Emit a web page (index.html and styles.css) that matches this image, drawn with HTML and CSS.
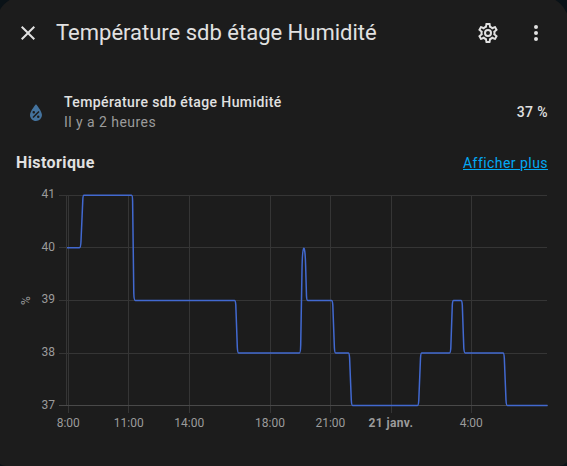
FILE: index.html
```
<!DOCTYPE html>
<html lang="fr">
<head>
<meta charset="utf-8">
<title>Température sdb étage Humidité</title>
<link rel="stylesheet" href="styles.css">
</head>
<body>
<main class="dialog">
  <header class="header">
    <svg class="icon" viewBox="0 0 24 24"><path d="M19,6.41L17.59,5L12,10.59L6.41,5L5,6.41L10.59,12L5,17.59L6.41,19L12,13.41L17.59,19L19,17.59L13.41,12L19,6.41Z"/></svg>
    <h1 class="title">Température sdb étage Humidité</h1>
    <svg class="icon" viewBox="0 0 24 24"><path d="M12,8A4,4 0 0,1 16,12A4,4 0 0,1 12,16A4,4 0 0,1 8,12A4,4 0 0,1 12,8M12,10A2,2 0 0,0 10,12A2,2 0 0,0 12,14A2,2 0 0,0 14,12A2,2 0 0,0 12,10M10,22C9.75,22 9.54,21.82 9.5,21.58L9.13,18.93C8.5,18.68 7.96,18.34 7.44,17.94L4.95,18.95C4.73,19.03 4.46,18.95 4.34,18.73L2.34,15.27C2.21,15.05 2.27,14.78 2.46,14.63L4.57,12.97L4.5,12L4.57,11L2.46,9.37C2.27,9.22 2.21,8.95 2.34,8.73L4.34,5.27C4.46,5.05 4.73,4.96 4.95,5.05L7.44,6.05C7.96,5.66 8.5,5.32 9.13,5.07L9.5,2.42C9.54,2.18 9.75,2 10,2H14C14.25,2 14.46,2.18 14.5,2.42L14.87,5.07C15.5,5.32 16.04,5.66 16.56,6.05L19.05,5.05C19.27,4.96 19.54,5.05 19.66,5.27L21.66,8.73C21.79,8.95 21.73,9.22 21.54,9.37L19.43,11L19.5,12L19.43,13L21.54,14.63C21.73,14.78 21.79,15.05 21.66,15.27L19.66,18.73C19.54,18.95 19.27,19.04 19.05,18.95L16.56,17.95C16.04,18.34 15.5,18.68 14.87,18.93L14.5,21.58C14.46,21.82 14.25,22 14,22H10M11.25,4L10.88,6.61C9.68,6.86 8.62,7.5 7.85,8.39L5.44,7.35L4.69,8.65L6.8,10.2C6.4,11.37 6.4,12.64 6.8,13.8L4.68,15.36L5.43,16.66L7.86,15.62C8.63,16.5 9.68,17.14 10.87,17.38L11.24,20H12.76L13.13,17.39C14.32,17.14 15.37,16.5 16.14,15.62L18.57,16.66L19.32,15.36L17.2,13.81C17.6,12.64 17.6,11.37 17.2,10.2L19.31,8.65L18.56,7.35L16.15,8.39C15.38,7.5 14.32,6.86 13.12,6.62L12.75,4H11.25Z"/></svg>
    <svg class="icon menu" viewBox="0 0 24 24"><path d="M12,16A2,2 0 0,1 14,18A2,2 0 0,1 12,20A2,2 0 0,1 10,18A2,2 0 0,1 12,16M12,10A2,2 0 0,1 14,12A2,2 0 0,1 12,14A2,2 0 0,1 10,12A2,2 0 0,1 12,10M12,4A2,2 0 0,1 14,6A2,2 0 0,1 12,8A2,2 0 0,1 10,6A2,2 0 0,1 12,4Z"/></svg>
  </header>
  <section class="entity">
    <svg class="drop" viewBox="0 0 24 24"><path d="M12,3.25C12,3.25 6,10 6,14C6,17.32 8.69,20 12,20A6,6 0 0,0 18,14C18,10 12,3.25 12,3.25M14.47,9.97L15.53,11.03L9.53,17.03L8.47,15.97M9.75,10A1.25,1.25 0 0,1 11,11.25A1.25,1.25 0 0,1 9.75,12.5A1.25,1.25 0 0,1 8.5,11.25A1.25,1.25 0 0,1 9.75,10M14.25,14.5A1.25,1.25 0 0,1 15.5,15.75A1.25,1.25 0 0,1 14.25,17A1.25,1.25 0 0,1 13,15.75A1.25,1.25 0 0,1 14.25,14.5Z"/></svg>
    <div class="info">
      <div class="name">Température sdb étage Humidité</div>
      <div class="ago">Il y a 2 heures</div>
    </div>
    <div class="state">37 %</div>
  </section>
  <section class="history">
    <h2 class="subtitle">Historique</h2>
    <a class="more">Afficher plus</a>
  </section>
  <svg class="chart" viewBox="0 180 567 260">
    <g class="grid">
      <path d="M59 195.5H547M59 247.5H547M59 300.5H547M59 353.5H547"/>
      <path d="M66.5 195V405M68.5 195V413M128.5 195V413M189.5 195V413M270.5 195V413M330.5 195V413M391.5 195V413M471.5 195V413"/>
      <path class="axis" d="M59 405.5H548"/>
    </g>
    <path class="line" d="M67 247.7H79.5Q80.7 247.7 81 241L82.8 200Q83 195.3 84 195.3H131.5Q132.5 195.3 132.6 201L133.8 293Q134 300.4 135.3 300.4H234.5Q235.5 300.4 235.8 305L237.3 347Q237.6 352.9 238.6 352.9H299.5Q300.5 352.9 300.7 345L302 270C302.5 242 305 242 305.6 265L306.5 296Q306.7 300.4 307.7 300.4H331.5Q332.5 300.4 332.8 305L334.4 348Q334.7 352.9 335.7 352.9H348.3Q349.3 352.9 349.6 358L351.3 400Q351.6 405.4 352.6 405.4H417.5Q418.5 405.4 418.8 400L420.5 358Q420.8 352.9 421.8 352.9H449.5Q450.5 352.9 450.8 348L452.3 305Q452.6 300.4 453.6 300.4H461Q462 300.4 462.3 305L463.8 348Q464.2 352.9 465.2 352.9H503Q504 352.9 504.3 358L506 400Q506.3 405.4 507.3 405.4H547.5"/>
    <g class="labels y">
      <text x="55" y="198">41</text><text x="55" y="251">40</text><text x="55" y="303">39</text><text x="55" y="356">38</text><text x="55" y="409">37</text>
    </g>
    <g class="labels x">
      <text x="68.3" y="427">8:00</text><text x="128.7" y="427">11:00</text><text x="189.3" y="427">14:00</text><text x="270" y="427">18:00</text><text x="330.4" y="427">21:00</text><text class="bold" x="390.9" y="427">21 janv.</text><text x="471.3" y="427">4:00</text>
    </g>
    <text class="unit" transform="translate(29.5 300.5) rotate(-90)">%</text>
  </svg>
</main>
</body>
</html>
```
FILE: styles.css
```
* { box-sizing: border-box; }
body {
  margin: 0;
  width: 567px;
  height: 466px;
  overflow: hidden;
  background: #0a1217;
  font-family: Roboto, sans-serif;
  color: #e1e1e1;
}
.dialog {
  width: 573px;
  height: 470px;
  margin: -4px 0 0 -4px;
  padding: 4px 2px 0 4px;
  background: #1c1c1c;
  border-radius: 28px 28px 10px 10px;
}
.header {
  display: flex;
  align-items: center;
  height: 66px;
  padding: 0 19px 0 16px;
}
.icon { width: 24px; height: 24px; flex: none; fill: #e1e1e1; }
.menu { margin-left: 24px; }
.title {
  flex: 1;
  margin: 0 0 0 16px;
  font-size: 22px;
  line-height: 28px;
  font-weight: 400;
  white-space: nowrap;
}
.entity {
  display: flex;
  align-items: center;
  height: 40px;
  margin: 26px 19px 0 24px;
}
.drop { width: 24px; height: 24px; margin: 2px 16px 0 0; fill: #44739e; fill-rule: evenodd; }
.info { flex: 1; font-size: 14px; line-height: 20px; }
.name { font-weight: 500; letter-spacing: .4px; }
.ago { color: #9b9b9b; letter-spacing: .45px; }
.state { font-size: 14px; font-weight: 500; letter-spacing: .4px; }
.history {
  display: flex;
  align-items: center;
  justify-content: space-between;
  height: 48px;
  padding: 14px 19px 0 16px;
}
.subtitle { margin: 0; font-size: 16px; line-height: 24px; font-weight: 700; letter-spacing: .4px; }
.more { color: #03a9f4; font-size: 14px; letter-spacing: .45px; text-decoration: underline; }
.chart { display: block; width: 567px; height: 260px; }
.grid path { fill: none; stroke: #353535; stroke-width: 1; }
.grid .axis { stroke: #494949; }
.line { fill: none; stroke: #4269d0; stroke-width: 1.5; stroke-linejoin: round; }
.labels, .unit { fill: #9b9b9b; font-size: 12px; }
.labels.y { text-anchor: end; }
.labels.x, .unit { text-anchor: middle; }
.bold { font-weight: 700; letter-spacing: .4px; }
.unit { font-size: 12px; }
```
